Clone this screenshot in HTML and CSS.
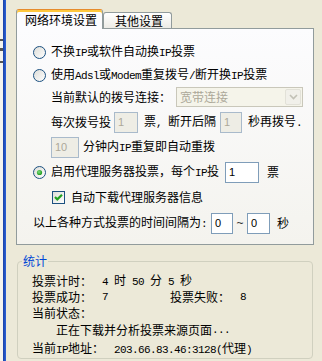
FILE: index.html
```html
<!DOCTYPE html>
<html>
<head>
<meta charset="utf-8">
<link rel="stylesheet" href="styles.css">
</head>
<body>
<div class="frame">
  <div class="edge"><i class="mk m1"></i><i class="mk m2"></i><i class="mk m3"></i></div>
  <div class="bar"></div>
  <div class="main">
    <div class="tabs">
      <div class="tab on">网络环境设置</div>
      <div class="tab">其他设置</div>
    </div>
    <div class="pane">
      <div class="row r1">
        <svg class="radio" width="13" height="13" viewBox="0 0 13 13"><defs><linearGradient id="rg" x1="0" y1="0" x2="1" y2="1"><stop offset="0" stop-color="#DCDCD7"/><stop offset="1" stop-color="#FFFFFF"/></linearGradient></defs><circle cx="6.5" cy="6.5" r="6" fill="url(#rg)" stroke="#1C5180"/></svg>
        <span>不换<span class="en">IP</span>或软件自动换<span class="en">IP</span>投票</span>
      </div>
      <div class="row r2">
        <svg class="radio" width="13" height="13" viewBox="0 0 13 13"><circle cx="6.5" cy="6.5" r="6" fill="url(#rg)" stroke="#1C5180"/></svg>
        <span>使用<span class="en">Adsl</span>或<span class="en">Modem</span>重复拨号<span class="en">/</span>断开换<span class="en">IP</span>投票</span>
      </div>
      <div class="row r3 ind">
        <span>当前默认的拨号连接：</span>
        <div class="combo"><span class="ctext">宽带连接</span><span class="cbtn"><svg width="9" height="6" viewBox="0 0 9 6"><path d="M1 1 L4.5 4.5 L8 1" fill="none" stroke="#C2C1B6" stroke-width="1.6"/></svg></span></div>
      </div>
      <div class="row r4 ind">
        <span>每次拨号投</span>
        <div class="inp dis w24">1</div>
        <span class="g6">票<span class="en">, </span>断开后隔</span>
        <div class="inp dis w22 g4">1</div>
        <span class="g6">秒再拨号<span class="en">.</span></span>
      </div>
      <div class="row r5 ind">
        <div class="inp dis w28">10</div>
        <span class="g4">分钟内<span class="en">IP</span>重复即自动重拨</span>
      </div>
      <div class="row r6">
        <svg class="radio" width="13" height="13" viewBox="0 0 13 13"><defs><radialGradient id="dot" cx="0.4" cy="0.4" r="0.6"><stop offset="0" stop-color="#7EE07E"/><stop offset="1" stop-color="#1E9A1E"/></radialGradient></defs><circle cx="6.5" cy="6.5" r="6" fill="url(#rg)" stroke="#1C5180"/><circle cx="6.5" cy="6.5" r="2.6" fill="url(#dot)"/></svg>
        <span>启用代理服务器投票，每个<span class="en">IP</span>投</span>
        <div class="inp w34 g6">1</div>
        <span class="g8">票</span>
      </div>
      <div class="row r7 ind">
        <svg class="check" width="13" height="13" viewBox="0 0 13 13"><rect x="0.5" y="0.5" width="12" height="12" fill="url(#rg)" stroke="#1C5180"/><path d="M3 6 L5.3 8.4 L10 3.7" fill="none" stroke="#21A121" stroke-width="2.2"/></svg>
        <span class="g6">自动下载代理服务器信息</span>
      </div>
      <div class="row r8">
        <span>以上各种方式投票的时间间隔为<span class="en">:</span></span>
        <div class="inp w22 g4">0</div>
        <span class="tilde">~</span>
        <div class="inp w23">0</div>
        <span class="g7">秒</span>
      </div>
    </div>
    <fieldset class="stats">
      <legend>统计</legend>
      <div class="srow s1"><span class="lbl">投票计时：</span><span class="val"><span class="en">4 </span>时<span class="en"> 50 </span>分<span class="en"> 5 </span>秒</span></div>
      <div class="srow s2"><span class="half"><span class="lbl">投票成功：</span><span class="val en">7</span></span><span class="lbl">投票失败：</span><span class="val en">8</span></div>
      <div class="srow s3">当前状态：</div>
      <div class="srow s4 sub">正在下载并分析投票来源页面<span class="en">...</span></div>
      <div class="srow s5"><span class="lbl">当前<span class="en">IP</span>地址：</span><span class="val"><span class="en">203.66.83.46:3128(</span>代理<span class="en">)</span></span></div>
    </fieldset>
  </div>
</div>
</body>
</html>
```

FILE: styles.css
```css
* { box-sizing: border-box; }
html, body { margin: 0; padding: 0; }
body {
  width: 322px;
  height: 361px;
  overflow: hidden;
  background: #ECE9D8;
  font-family: "Noto Sans CJK SC", sans-serif;
  font-size: 12px;
  line-height: 14px;
  color: #000;
}
.frame { display: flex; height: 361px; }
.edge {
  width: 3px;
  flex: none;
  background: #F4F3EF;
  display: flex;
  flex-direction: column;
}
.mk { display: block; background: #555; width: 3px; }
.m1 { height: 2px; margin-top: 39px; }
.m2 { height: 3px; margin-top: 7px; }
.m3 { height: 2px; margin-top: 10px; }
.bar {
  width: 3px;
  flex: none;
  background: linear-gradient(to right, #1941A5, #2C62DA);
}
.main { padding: 9px 0 0 10px; width: 308px; }

.tabs {
  display: flex;
  align-items: flex-end;
  height: 20px;
  margin-bottom: -1px;
  position: relative;
  z-index: 1;
}
.tab {
  height: 16px;
  margin-bottom: 1px;
  width: 69px;
  padding-left: 11px;
  border: 1px solid #919B9C;
  border-bottom: none;
  border-radius: 3px 3px 0 0;
  background: linear-gradient(#FFFFFF, #ECEBE6);
  line-height: 15px;
  white-space: nowrap;
}
.tab.on {
  height: 20px;
  margin-bottom: 0;
  width: 87px;
  padding-left: 8px;
  border-top: 1px solid #E68B2C;
  box-shadow: inset 0 2px 0 #FFC83C;
  background: #FCFCFE;
  line-height: 18px;
  padding-top: 1px;
}
.pane {
  width: 298px;
  height: 217px;
  border: 1px solid #919B9C;
  background: linear-gradient(#FCFCFE, #F4F3EE);
  padding: 12px 0 0 16px;
}
.row { display: flex; align-items: center; height: 22px; white-space: nowrap; }
.ind { padding-left: 18px; }
.r2 { margin-top: 1px; }
.r4, .r5, .r6, .r7 { margin-top: 3px; }
.r8 { margin-top: 4px; }
.radio { flex: none; margin-right: 5px; }
.check { flex: none; margin-left: 1px; }
.en {
  font-family: "Liberation Mono", monospace;
  font-size: 11px;
  letter-spacing: -0.6px;
  white-space: pre;
}
.g4 { margin-left: 4px; }
.g6 { margin-left: 6px; }
.g7 { margin-left: 7px; }
.g8 { margin-left: 8px; }
.combo {
  display: flex;
  align-items: center;
  width: 127px;
  height: 20px;
  margin-left: 5px;
  border: 1px solid #C9C7BA;
  background: #F5F4EA;
  padding: 1px;
}
.ctext { flex: 1; padding-left: 2px; color: #ACA899; }
.cbtn {
  width: 16px;
  height: 16px;
  display: flex;
  align-items: center;
  justify-content: center;
  background: #F1F0EA;
  border: 1px solid #E2E1D8;
  border-radius: 2px;
}
.inp {
  flex: none;
  height: 21px;
  border: 1px solid #7F9DB9;
  background: #FFFFFF;
  font-family: "Liberation Sans", sans-serif;
  font-size: 11px;
  line-height: 19px;
  padding-left: 3px;
}
.dis { background: #EEEDE5; color: #ACA899; border-color: #A9BACB; }
.w22 { width: 22px; }
.w23 { width: 23px; }
.w24 { width: 24px; margin-left: 3px; }
.w28 { width: 28px; }
.w34 { width: 34px; }
.tilde { width: 14px; text-align: center; font-family: "Liberation Sans", sans-serif; font-size: 12px; color: #333; }

.stats {
  margin: 9px 0 0 1px;
  width: 296px;
  border: 1px solid #D0D0BF;
  border-radius: 4px;
  padding: 6px 0 0 4px;
  height: 105px;
}
.stats legend {
  color: #0046D5;
  padding: 0 1px;
  line-height: 14px;
}
.srow { display: flex; height: 14px; margin-left: 10px; white-space: nowrap; align-items: center; }
.s2, .s3 { margin-top: 2px; }
.s4 { margin-top: 3px; }
.s5 { margin-top: 5px; }
.sub { padding-left: 24px; }
.val { margin-left: 10px; }
.half { display: flex; width: 138px; }
```
